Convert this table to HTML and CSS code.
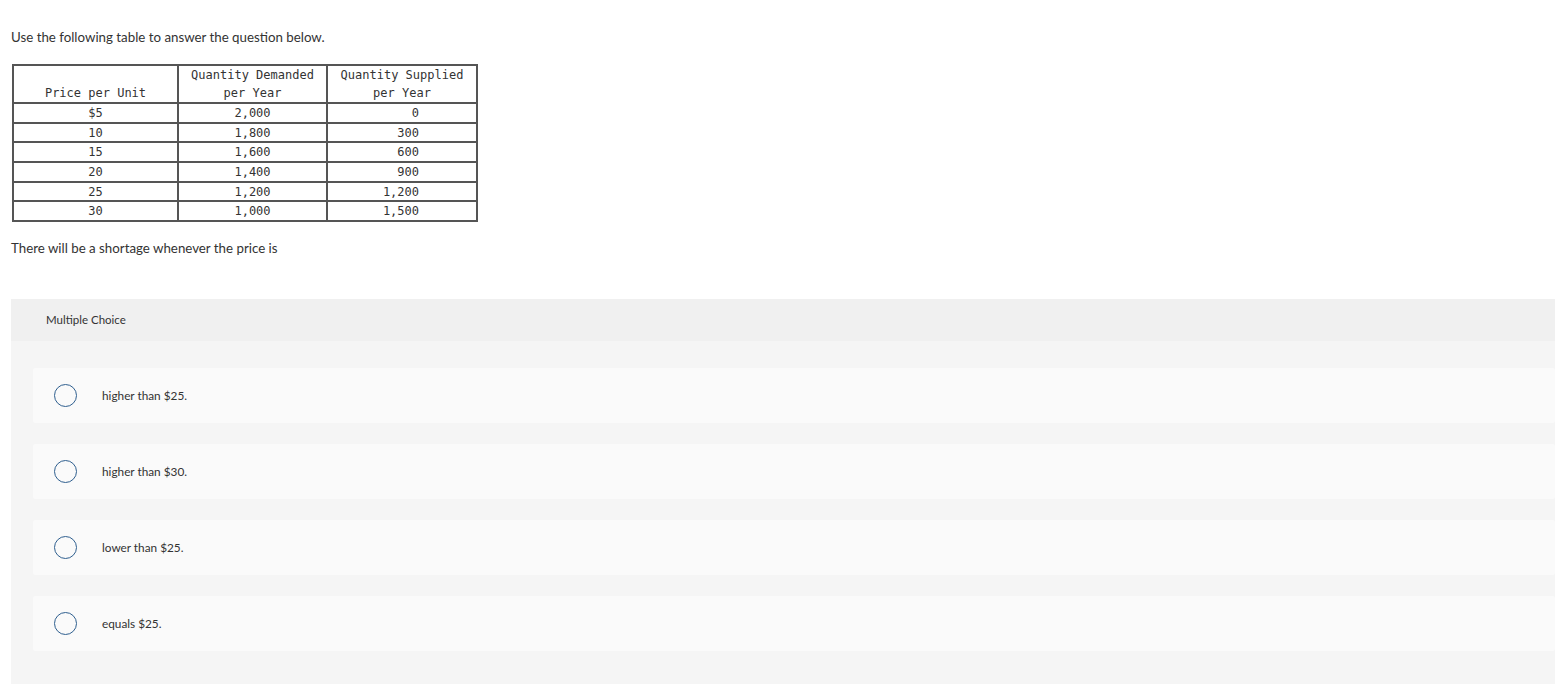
FILE: index.html
```html
<!DOCTYPE html>
<html>
<head>
<meta charset="utf-8">
<link rel="stylesheet" href="styles.css">
</head>
<body>
<div class="page">
  <p class="prompt">Use the following table to answer the question below.</p>
  <table class="data">
    <thead>
      <tr>
        <th class="c1">Price per Unit</th>
        <th class="c2">Quantity Demanded<br>per Year</th>
        <th class="c3">Quantity Supplied<br>per Year</th>
      </tr>
    </thead>
    <tbody>
      <tr><td class="c1">$5</td><td class="c2">2,000</td><td class="c3">0</td></tr>
      <tr><td class="c1">10</td><td class="c2">1,800</td><td class="c3">300</td></tr>
      <tr><td class="c1">15</td><td class="c2">1,600</td><td class="c3">600</td></tr>
      <tr><td class="c1">20</td><td class="c2">1,400</td><td class="c3">900</td></tr>
      <tr><td class="c1">25</td><td class="c2">1,200</td><td class="c3">1,200</td></tr>
      <tr><td class="c1">30</td><td class="c2">1,000</td><td class="c3">1,500</td></tr>
    </tbody>
  </table>
  <p class="question">There will be a shortage whenever the price is</p>
  <div class="mc">
    <div class="mc-head">Multiple Choice</div>
    <div class="mc-body">
      <div class="opt"><span class="radio"></span><span class="opt-text">higher than $25.</span></div>
      <div class="opt"><span class="radio"></span><span class="opt-text">higher than $30.</span></div>
      <div class="opt"><span class="radio"></span><span class="opt-text">lower than $25.</span></div>
      <div class="opt"><span class="radio"></span><span class="opt-text">equals $25.</span></div>
    </div>
  </div>
</div>
</body>
</html>
```

FILE: styles.css
```css
html, body {
  margin: 0;
  padding: 0;
  background: #ffffff;
}
body {
  font-family: "Lato", "Open Sans", sans-serif;
  color: #333333;
}
.page {
  padding: 29px 0 0 11px;
}
.prompt {
  margin: 0;
  font-size: 13.3px;
  line-height: 16px;
}
.data {
  margin: 19px 0 0 1px;
  border-collapse: separate;
  border-spacing: 0;
  border: 1px solid #555555;
  font-family: "DejaVu Sans Mono", monospace;
  font-size: 12px;
  color: #333333;
}
.data th, .data td {
  border: 1px solid #555555;
  padding: 0;
  font-weight: normal;
}
.data th {
  vertical-align: bottom;
  line-height: 18px;
  padding: 0;
}
.data td {
  height: 17.7px;
  line-height: 16px;
}
.c1 { width: 163px; text-align: center; }
.c2 { width: 147px; text-align: center; }
.data td.c3 { width: 150px; text-align: right; padding-right: 57px; box-sizing: border-box; }
.data th.c3 { width: 148px; }
.question {
  margin: 18px 0 0;
  font-size: 13.3px;
  line-height: 16px;
}
.mc {
  margin-top: 43px;
  background: #f5f5f5;
  padding-bottom: 40px;
}
.mc-head {
  background: #f0f0f0;
  height: 42px;
  line-height: 42px;
  padding-left: 35px;
  font-size: 11.5px;
}
.mc-body {
  padding: 27px 0 0 22px;
  display: flex;
  flex-direction: column;
  gap: 21px;
}
.opt {
  background: #fafafa;
  height: 55px;
  border-radius: 2px;
  display: flex;
  align-items: center;
  padding-left: 21px;
}
.radio {
  border: 1.5px solid #2f5f8f;
  border-radius: 50%;
  box-sizing: border-box;
  width: 23px;
  height: 23px;
}
.opt-text {
  margin-left: 25px;
  font-size: 11.8px;
}
```
